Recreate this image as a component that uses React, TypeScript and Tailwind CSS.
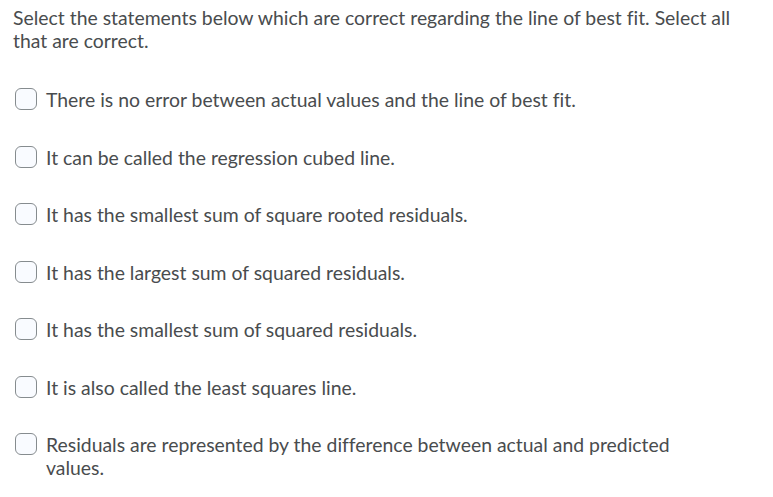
import React from "react";

const items = [
  "There is no error between actual values and the line of best fit.",
  "It can be called the regression cubed line.",
  "It has the smallest sum of square rooted residuals.",
  "It has the largest sum of squared residuals.",
  "It has the smallest sum of squared residuals.",
  "It is also called the least squares line.",
  "Residuals are represented by the difference between actual and predicted values.",
];

export default function App() {
  return (
    <div
      className="w-[773px] h-[497px] bg-white text-[#494c4e] overflow-hidden"
      style={{ fontFamily: "Lato, 'Open Sans', sans-serif", fontVariantLigatures: "none" }}
    >
      <div className="pl-[13px] pr-[10px] pt-[6px] text-[19.4px] leading-[23px]">
        Select the statements below which are correct regarding the line of best fit. Select all that are correct.
      </div>
      <div className="flex flex-col gap-[34.5px] pt-[36px] pl-[15px] pr-[90px]">
        {items.map((t) => (
          <div key={t} className="flex items-start gap-[9px]">
            <span className="w-[22px] h-[22px] shrink-0 rounded-[6px] border border-[#868c8f] bg-[#f9fbff]" />
            <span className="text-[19.4px] leading-[23px]">{t}</span>
          </div>
        ))}
      </div>
    </div>
  );
}
